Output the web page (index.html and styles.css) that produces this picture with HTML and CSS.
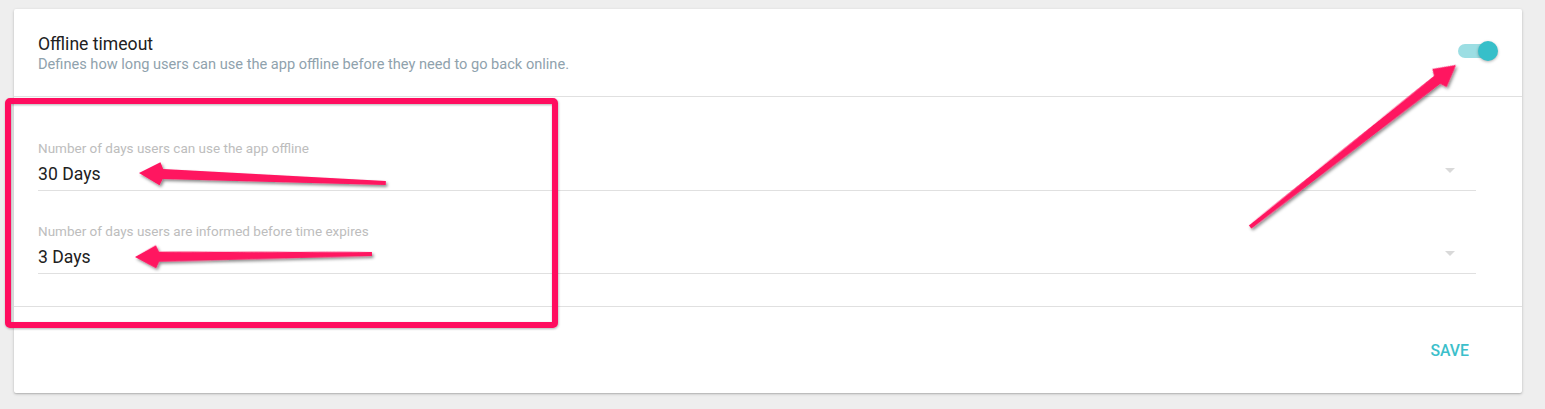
FILE: index.html
```html
<!DOCTYPE html>
<html lang="en">
<head>
<meta charset="utf-8">
<title>Offline timeout</title>
<link rel="stylesheet" href="styles.css">
</head>
<body>
<div class="card">
  <div class="card-header">
    <div class="head-text">
      <div class="title">Offline timeout</div>
      <div class="subtitle">Defines how long users can use the app offline before they need to go back online.</div>
    </div>
    <div class="switch" role="switch" aria-checked="true">
      <span class="switch-track"></span>
      <span class="switch-thumb"></span>
    </div>
  </div>
  <div class="card-body">
    <div class="field">
      <div class="field-label">Number of days users can use the app offline</div>
      <div class="field-value"><span>30 Days</span><span class="caret"></span></div>
    </div>
    <div class="field">
      <div class="field-label">Number of days users are informed before time expires</div>
      <div class="field-value"><span>3 Days</span><span class="caret"></span></div>
    </div>
  </div>
  <div class="card-footer">
    <span class="save-btn">SAVE</span>
  </div>
</div>

<svg class="annotations" width="1545" height="409" viewBox="0 0 1545 409" aria-hidden="true">
  <defs>
    <filter id="shadow" x="-20%" y="-20%" width="140%" height="140%">
      <feDropShadow dx="1.5" dy="2" stdDeviation="1.4" flood-color="#000" flood-opacity="0.45"/>
    </filter>
    <filter id="boxshadow" x="-5%" y="-5%" width="110%" height="110%">
      <feDropShadow dx="0.5" dy="1" stdDeviation="0.8" flood-color="#000" flood-opacity="0.3"/>
    </filter>
  </defs>
  <rect x="8" y="101" width="547" height="224" rx="2" fill="none" stroke="#ff0f5e" stroke-width="6" filter="url(#boxshadow)"/>
  <g filter="url(#shadow)" fill="#ff1460">
    <polygon transform="translate(139,173) rotate(2.32)" points="0,0 21,-11.5 24,-5 247,-1.9 247,1.9 24,5 21,11.5"/>
    <polygon transform="translate(135,257) rotate(-0.73)" points="0,0 21,-11.5 24,-5 237,-1.9 237,1.9 24,5 21,11.5"/>
    <polygon transform="translate(1456,65) rotate(141.8)" points="0,0 21,-11.5 24,-5 262,-1.9 262,1.9 24,5 21,11.5"/>
  </g>
</svg>
</body>
</html>
```

FILE: styles.css
```css
html, body {
  margin: 0;
  padding: 0;
}
body {
  background: #eeeeee;
  font-family: Roboto, "Liberation Sans", Arial, sans-serif;
  padding: 9px 23px 16px 14px;
  position: relative;
}
.card {
  background: #ffffff;
  border-radius: 2px;
  box-shadow: 0 1px 3px rgba(0, 0, 0, 0.22), 0 1px 1px rgba(0, 0, 0, 0.08);
}
.card-header {
  display: flex;
  justify-content: space-between;
  align-items: flex-start;
  padding: 25px 24px 22px 24px;
  border-bottom: 1px solid #e0e0e0;
}
.title {
  font-size: 17.6px;
  line-height: 20px;
  color: #212121;
}
.subtitle {
  font-size: 14.6px;
  line-height: 20px;
  color: #8fa2ad;
}
.switch {
  position: relative;
  width: 40px;
  height: 20px;
  margin-top: 7px;
  flex: none;
}
.switch-track {
  position: absolute;
  left: 0;
  top: 3px;
  width: 34px;
  height: 14px;
  border-radius: 7px;
  background: #9cdee3;
}
.switch-thumb {
  position: absolute;
  right: 0;
  top: 0;
  width: 20px;
  height: 20px;
  border-radius: 50%;
  background: #36bfc9;
  box-shadow: 0 1px 3px rgba(0, 0, 0, 0.3);
}
.card-body {
  padding: 11px 46px 32px 24px;
  border-bottom: 1px solid #e0e0e0;
}
.field {
  padding-top: 32px;
}
.field-label {
  font-size: 13.5px;
  line-height: 16px;
  color: #bdbdbd;
  margin-bottom: 6px;
}
.field-value {
  display: flex;
  justify-content: space-between;
  align-items: flex-start;
  font-size: 17.6px;
  line-height: 24px;
  color: #212121;
  padding-bottom: 4px;
  border-bottom: 1px solid #e0e0e0;
}
.caret {
  width: 0;
  height: 0;
  margin-top: 6px;
  margin-right: 21px;
  border-left: 5.5px solid transparent;
  border-right: 5.5px solid transparent;
  border-top: 5.5px solid #d9d9d9;
}
.card-footer {
  padding: 34px 53px 32px 24px;
  text-align: right;
}
.save-btn {
  font-size: 15.8px;
  line-height: 20px;
  font-weight: 500;
  color: #3cbfcb;
  display: inline-block;
}
.annotations {
  position: absolute;
  left: 0;
  top: 0;
  pointer-events: none;
}
```
